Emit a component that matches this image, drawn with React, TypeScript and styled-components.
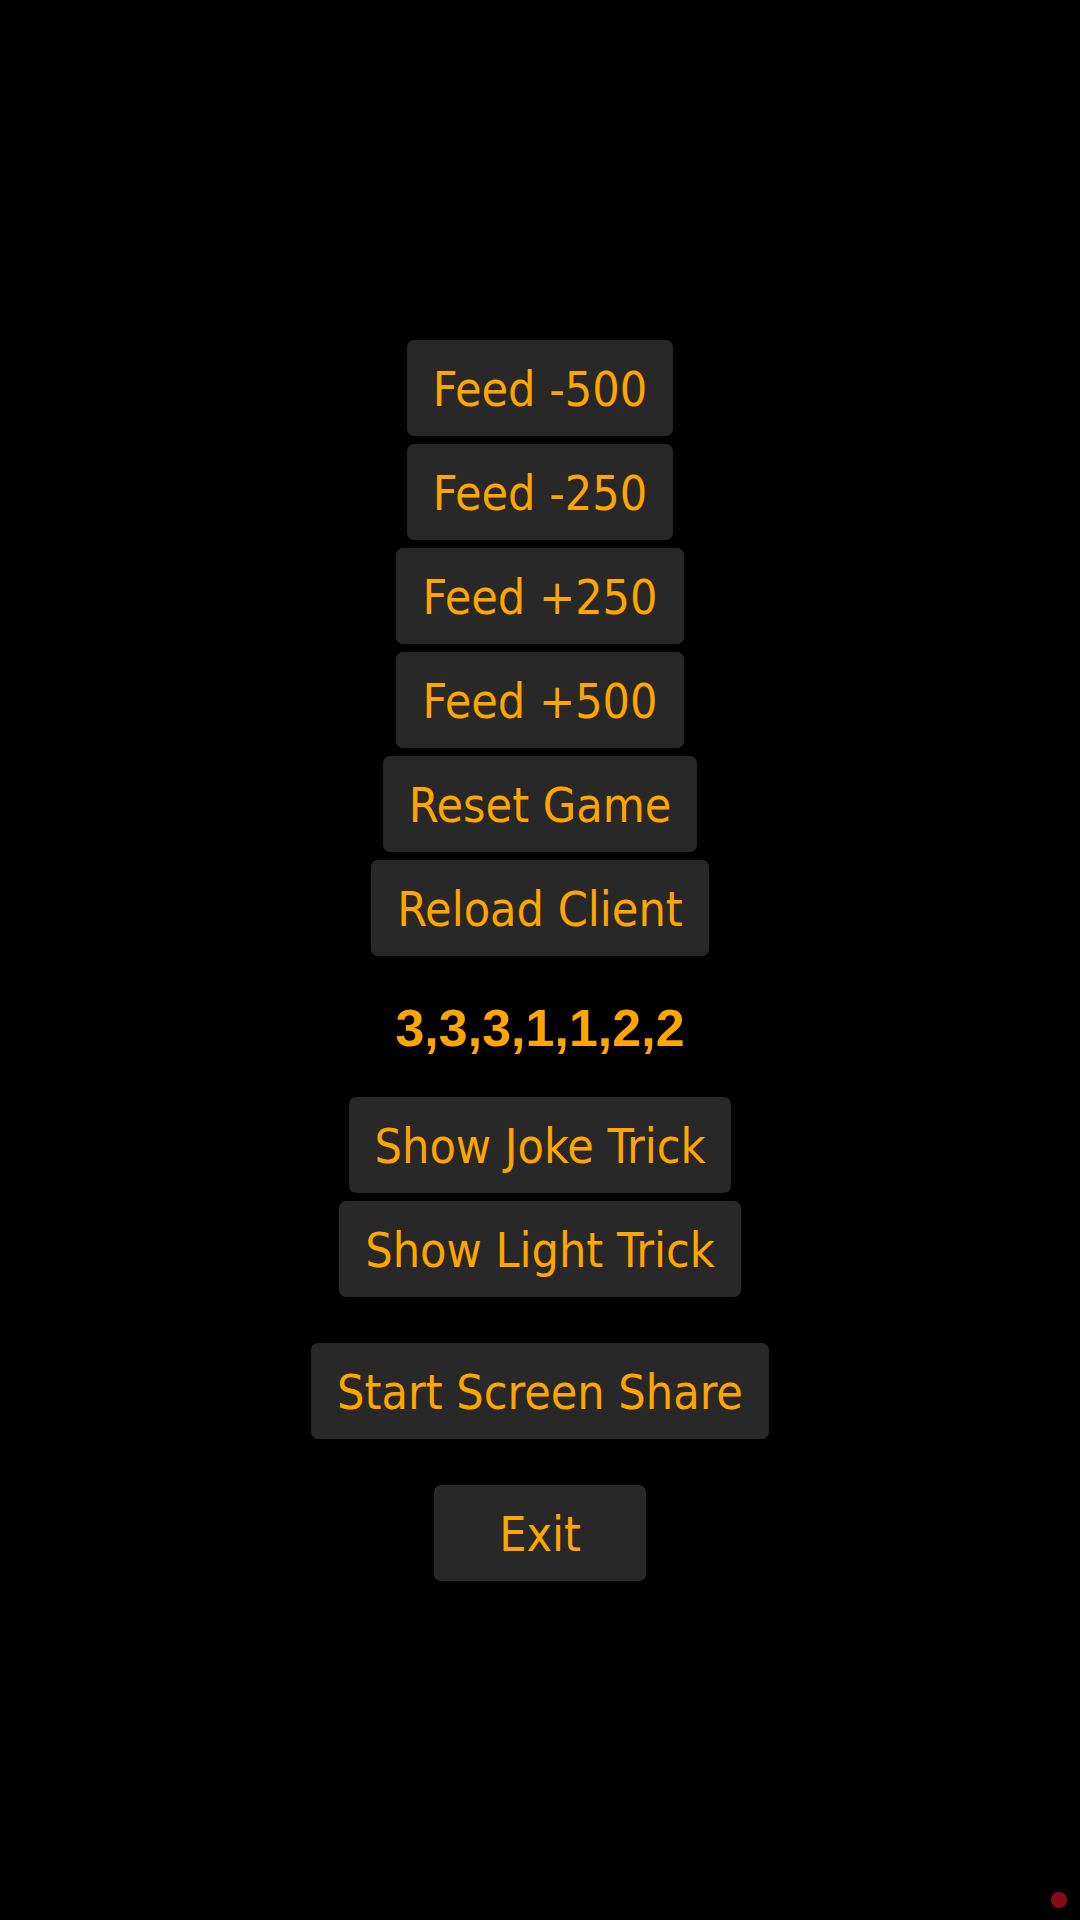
import React from 'react'
import styled, { createGlobalStyle } from 'styled-components'

const GlobalStyle = createGlobalStyle`
  html, body {
    margin: 0;
    padding: 0;
    background-color: #000000;
  }
`

const Page = styled.div`
  min-height: 100vh;
  display: flex;
  flex-direction: column;
  align-items: center;
  justify-content: center;
  background-color: #000000;
`

const ButtonGroup = styled.div<{ spaced?: boolean }>`
  display: flex;
  flex-direction: column;
  align-items: center;
  gap: 8px;
  margin-top: ${props => (props.spaced ? 46 : 0)}px;
`

const MenuButton = styled.button`
  min-width: 212px;
  padding: 21px 26px 19px;
  border: none;
  border-radius: 7px;
  background-color: #282828;
  color: #FFA500;
  font-family: "DejaVu Sans Condensed", "DejaVu Sans", sans-serif;
  font-size: 48px;
  line-height: 56px;
  cursor: pointer;
`

const Sequence = styled.div`
  margin: 42px 0 39px;
  color: #FFA500;
  font-family: "Liberation Sans", Arial, sans-serif;
  font-weight: bold;
  font-size: 52px;
  line-height: 60px;
`

const StatusDot = styled.div`
  position: fixed;
  right: 13px;
  bottom: 12px;
  width: 16px;
  height: 16px;
  border-radius: 50%;
  background-color: #8b0a1a;
`

const feedSteps = [-500, -250, 250, 500]

function App() {
  const sequence = [3, 3, 3, 1, 1, 2, 2]

  return (
    <>
      <GlobalStyle />
      <Page>
        <ButtonGroup>
          {feedSteps.map(step => (
            <MenuButton key={step}>Feed {step > 0 ? `+${step}` : step}</MenuButton>
          ))}
          <MenuButton>Reset Game</MenuButton>
          <MenuButton>Reload Client</MenuButton>
        </ButtonGroup>
        <Sequence>{sequence.join(',')}</Sequence>
        <ButtonGroup>
          <MenuButton>Show Joke Trick</MenuButton>
          <MenuButton>Show Light Trick</MenuButton>
        </ButtonGroup>
        <ButtonGroup spaced>
          <MenuButton>Start Screen Share</MenuButton>
        </ButtonGroup>
        <ButtonGroup spaced>
          <MenuButton>Exit</MenuButton>
        </ButtonGroup>
      </Page>
      <StatusDot />
    </>
  )
}

export default App
